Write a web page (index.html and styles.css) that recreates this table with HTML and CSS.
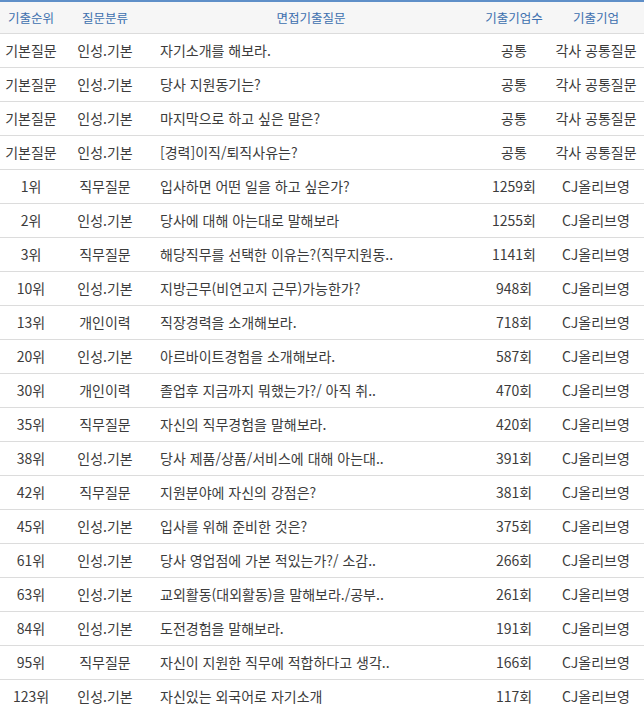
FILE: index.html
```html
<!DOCTYPE html>
<html lang="ko">
<head>
<meta charset="utf-8">
<link rel="stylesheet" href="styles.css">
</head>
<body>
<table class="qtable">
  <colgroup>
    <col class="c-rank"><col class="c-cat"><col class="c-q"><col class="c-cnt"><col class="c-co">
  </colgroup>
  <thead>
    <tr><th>기출순위</th><th>질문분류</th><th>면접기출질문</th><th>기출기업수</th><th>기출기업</th></tr>
  </thead>
  <tbody>
    <tr><td>기본질문</td><td>인성.기본</td><td class="q">자기소개를 해보라.</td><td>공통</td><td class="co">각사 공통질문</td></tr>
    <tr><td>기본질문</td><td>인성.기본</td><td class="q">당사 지원동기는?</td><td>공통</td><td class="co">각사 공통질문</td></tr>
    <tr><td>기본질문</td><td>인성.기본</td><td class="q">마지막으로 하고 싶은 말은?</td><td>공통</td><td class="co">각사 공통질문</td></tr>
    <tr><td>기본질문</td><td>인성.기본</td><td class="q">[경력]이직/퇴직사유는?</td><td>공통</td><td class="co">각사 공통질문</td></tr>
    <tr><td>1위</td><td>직무질문</td><td class="q">입사하면 어떤 일을 하고 싶은가?</td><td>1259회</td><td class="co">CJ올리브영</td></tr>
    <tr><td>2위</td><td>인성.기본</td><td class="q">당사에 대해 아는대로 말해보라</td><td>1255회</td><td class="co">CJ올리브영</td></tr>
    <tr><td>3위</td><td>직무질문</td><td class="q">해당직무를 선택한 이유는?(직무지원동..</td><td>1141회</td><td class="co">CJ올리브영</td></tr>
    <tr><td>10위</td><td>인성.기본</td><td class="q">지방근무(비연고지 근무)가능한가?</td><td>948회</td><td class="co">CJ올리브영</td></tr>
    <tr><td>13위</td><td>개인이력</td><td class="q">직장경력을 소개해보라.</td><td>718회</td><td class="co">CJ올리브영</td></tr>
    <tr><td>20위</td><td>인성.기본</td><td class="q">아르바이트경험을 소개해보라.</td><td>587회</td><td class="co">CJ올리브영</td></tr>
    <tr><td>30위</td><td>개인이력</td><td class="q">졸업후 지금까지 뭐했는가?/ 아직 취..</td><td>470회</td><td class="co">CJ올리브영</td></tr>
    <tr><td>35위</td><td>직무질문</td><td class="q">자신의 직무경험을 말해보라.</td><td>420회</td><td class="co">CJ올리브영</td></tr>
    <tr><td>38위</td><td>인성.기본</td><td class="q">당사 제품/상품/서비스에 대해 아는대..</td><td>391회</td><td class="co">CJ올리브영</td></tr>
    <tr><td>42위</td><td>직무질문</td><td class="q">지원분야에 자신의 강점은?</td><td>381회</td><td class="co">CJ올리브영</td></tr>
    <tr><td>45위</td><td>인성.기본</td><td class="q">입사를 위해 준비한 것은?</td><td>375회</td><td class="co">CJ올리브영</td></tr>
    <tr><td>61위</td><td>인성.기본</td><td class="q">당사 영업점에 가본 적있는가?/ 소감..</td><td>266회</td><td class="co">CJ올리브영</td></tr>
    <tr><td>63위</td><td>인성.기본</td><td class="q">교외활동(대외활동)을 말해보라./공부..</td><td>261회</td><td class="co">CJ올리브영</td></tr>
    <tr><td>84위</td><td>인성.기본</td><td class="q">도전경험을 말해보라.</td><td>191회</td><td class="co">CJ올리브영</td></tr>
    <tr><td>95위</td><td>직무질문</td><td class="q">자신이 지원한 직무에 적합하다고 생각..</td><td>166회</td><td class="co">CJ올리브영</td></tr>
    <tr><td>123위</td><td>인성.기본</td><td class="q">자신있는 외국어로 자기소개</td><td>117회</td><td class="co">CJ올리브영</td></tr>
  </tbody>
</table>
</body>
</html>
```
FILE: styles.css
```css
html, body {
  margin: 0;
  padding: 0;
  background: #ffffff;
}
body {
  font-family: "Noto Sans CJK KR", "Noto Sans", sans-serif;
  font-size: 14px;
  color: #3c3c3c;
}
.qtable {
  width: 644px;
  table-layout: fixed;
  border-collapse: separate;
  border-spacing: 0;
  border-top: 2px solid #5f8fc8;
}
.c-rank { width: 62px; }
.c-cat { width: 86px; }
.c-q { width: 326px; }
.c-cnt { width: 80px; }
.c-co { width: 90px; }
.qtable th {
  background: #f6f6f6;
  color: #3d6fae;
  font-weight: normal;
  font-size: 12.5px;
  height: 31px;
  line-height: 31px;
  padding: 0;
  text-align: center;
  border-bottom: 1px solid #dcdcdc;
  white-space: nowrap;
}
.qtable td {
  height: 33px;
  line-height: 33px;
  padding: 0;
  text-align: center;
  border-bottom: 1px solid #dcdcdc;
  white-space: nowrap;
  overflow: hidden;
}
.qtable td.q {
  text-align: left;
  padding-left: 12px;
}
.qtable td.co {
  padding-right: 6px;
}
.qtable th:last-child {
  padding-right: 6px;
}
```
